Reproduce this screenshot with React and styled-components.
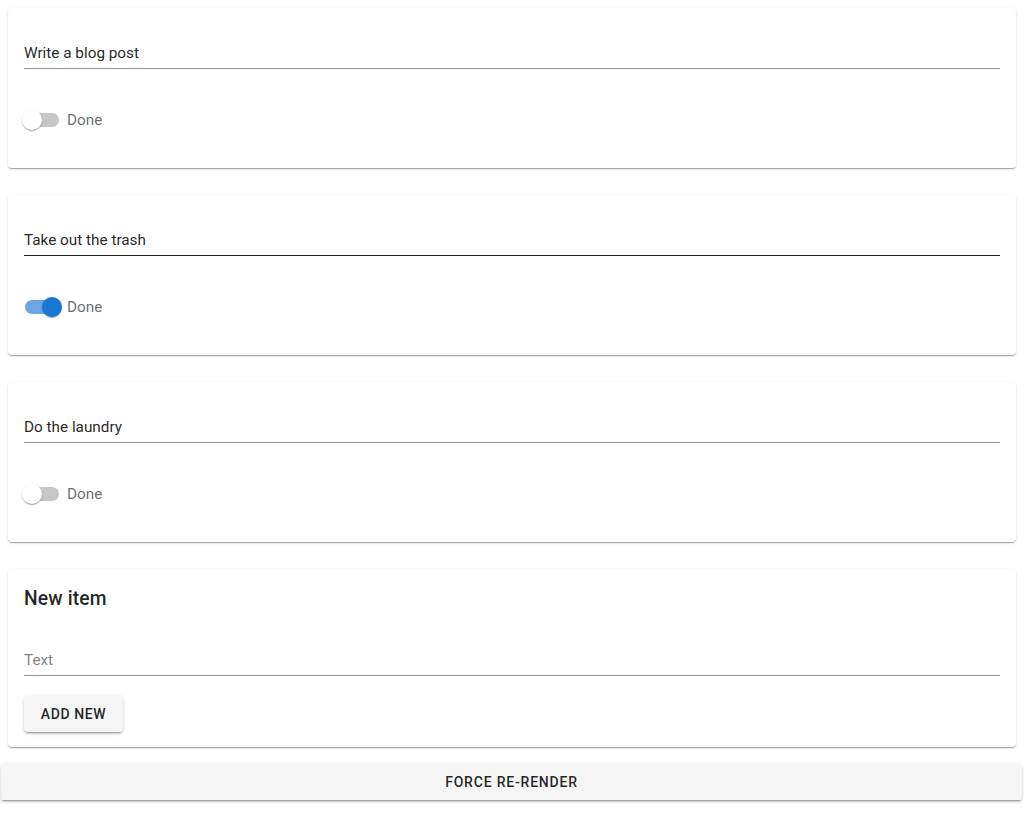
import React, { useState } from 'react';
import styled, { createGlobalStyle } from 'styled-components';

const GlobalStyle = createGlobalStyle`
  body {
    margin: 0;
    background: #fff;
    font-family: Roboto, "Liberation Sans", Arial, sans-serif;
    color: rgba(0, 0, 0, 0.87);
  }
`;

const Page = styled.div`
  padding: 8px 8px 12px;
`;

const Card = styled.div`
  background: #fff;
  border-radius: 4px;
  box-shadow: 0px 2px 1px -1px rgba(0,0,0,0.2), 0px 1px 1px 0px rgba(0,0,0,0.14), 0px 1px 3px 0px rgba(0,0,0,0.12);
  padding: 16px 16px ${props => props.$bottom || 29}px;
  margin-bottom: 27px;
  display: flex;
  flex-direction: column;
  align-items: flex-start;
`;

const Title = styled.h6`
  margin: 0;
  font-size: 19.3px;
  font-weight: 500;
  line-height: 28px;
  letter-spacing: 0.15px;
`;

const Field = styled.input`
  align-self: stretch;
  margin-top: ${props => props.$top}px;
  box-sizing: border-box;
  height: 29px;
  padding: 3px 0 5px;
  border: none;
  border-bottom: 1px solid ${props => (props.$hover ? 'rgba(0,0,0,0.87)' : 'rgba(0,0,0,0.42)')};
  outline: none;
  background: transparent;
  font-family: inherit;
  font-size: 15.3px;
  line-height: 20px;
  color: rgba(0, 0, 0, 0.87);

  &::placeholder {
    color: rgba(0, 0, 0, 0.5);
  }
`;

const SwitchRow = styled.label`
  margin-top: 32px;
  height: 38px;
  display: flex;
  align-items: center;
  gap: 5px;
  cursor: pointer;
  font-size: 15.3px;
  color: rgba(0, 0, 0, 0.6);
`;

const SwitchRoot = styled.span`
  position: relative;
  width: 40px;
  height: 20px;
  margin-left: -2px;
`;

const Track = styled.span`
  position: absolute;
  left: 3px;
  top: 3px;
  width: 34px;
  height: 14px;
  border-radius: 7px;
  background: ${props => (props.$on ? 'rgba(25,118,210,0.65)' : '#c6c6c6')};
`;

const Thumb = styled.span`
  position: absolute;
  top: 0;
  left: ${props => (props.$on ? 20 : 0)}px;
  width: 20px;
  height: 20px;
  border-radius: 50%;
  background: ${props => (props.$on ? '#1976d2' : '#fff')};
  box-shadow: 0px 2px 1px -1px rgba(0,0,0,0.2), 0px 1px 1px 0px rgba(0,0,0,0.14), 0px 1px 3px 0px rgba(0,0,0,0.12);
  transition: left 150ms;
`;

const Button = styled.button`
  border: none;
  border-radius: 4px;
  background: #f5f5f5;
  color: rgba(0, 0, 0, 0.87);
  font-family: inherit;
  font-size: 14px;
  font-weight: 500;
  letter-spacing: 0.6px;
  text-transform: uppercase;
  cursor: pointer;
  box-shadow: 0px 3px 1px -2px rgba(0,0,0,0.2), 0px 2px 2px 0px rgba(0,0,0,0.14), 0px 1px 5px 0px rgba(0,0,0,0.12);
`;

const AddButton = styled(Button)`
  margin-top: 20px;
  height: 36px;
  padding: 0 16px;
  min-width: 99px;
`;

const Footer = styled.div`
  margin: -10px -6px 0 -7px;
`;

const WideButton = styled(Button)`
  display: block;
  width: 100%;
  height: 36px;
  border-radius: 2px;
  letter-spacing: 0.8px;
`;

const initialItems = [
  { id: 1, text: 'Write a blog post', done: false },
  { id: 2, text: 'Take out the trash', done: true, hover: true },
  { id: 3, text: 'Do the laundry', done: false },
];

const TodoCard = ({ item, onToggle, onText }) => (
  <Card>
    <Field $top={16} $hover={item.hover} value={item.text} onChange={e => onText(item.id, e.target.value)} />
    <SwitchRow onClick={() => onToggle(item.id)}>
      <SwitchRoot>
        <Track $on={item.done} />
        <Thumb $on={item.done} />
      </SwitchRoot>
      Done
    </SwitchRow>
  </Card>
);

export default function App() {
  const [items, setItems] = useState(initialItems);
  const [draft, setDraft] = useState('');

  const toggle = id => setItems(items.map(i => (i.id === id ? { ...i, done: !i.done } : i)));
  const setText = (id, text) => setItems(items.map(i => (i.id === id ? { ...i, text } : i)));
  const addNew = () => {
    if (!draft) return;
    setItems([...items, { id: Date.now(), text: draft, done: false }]);
    setDraft('');
  };

  return (
    <Page>
      <GlobalStyle />
      {items.map(item => (
        <TodoCard key={item.id} item={item} onToggle={toggle} onText={setText} />
      ))}
      <Card $bottom={15}>
        <Title>New item</Title>
        <Field $top={34} placeholder="Text" value={draft} onChange={e => setDraft(e.target.value)} />
        <AddButton onClick={addNew}>Add new</AddButton>
      </Card>
      <Footer>
        <WideButton onClick={() => setItems([...items])}>Force re-render</WideButton>
      </Footer>
    </Page>
  );
}
